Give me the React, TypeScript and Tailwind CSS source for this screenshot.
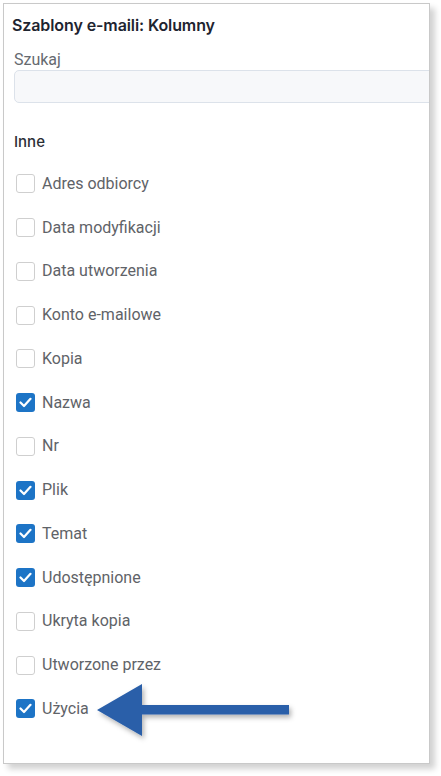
import React from "react";

const items: [string, boolean][] = [
  ["Adres odbiorcy", false],
  ["Data modyfikacji", false],
  ["Data utworzenia", false],
  ["Konto e-mailowe", false],
  ["Kopia", false],
  ["Nazwa", true],
  ["Nr", false],
  ["Plik", true],
  ["Temat", true],
  ["Udostępnione", true],
  ["Ukryta kopia", false],
  ["Utworzone przez", false],
  ["Użycia", true],
];

function Box({ checked }: { checked: boolean }) {
  if (checked) {
    return (
      <div className="w-[19px] h-[19px] rounded-[3px] bg-[#1d74c6] flex items-center justify-center shrink-0">
        <svg width="13" height="11" viewBox="0 0 13 11">
          <path d="M1.5 5.5 L5 9 L11.5 1.8" fill="none" stroke="white" strokeWidth="2.2" strokeLinecap="round" strokeLinejoin="round" />
        </svg>
      </div>
    );
  }
  return <div className="w-[19px] h-[19px] rounded-[3px] border border-[#cfcfcf] bg-white shrink-0" />;
}

export default function App() {
  return (
    <div className="w-[441px] h-[776px] bg-white pt-[3px] pl-[3px] relative" style={{ fontFamily: "Roboto, 'Liberation Sans', sans-serif" }}>
      <div className="w-[427px] h-[761px] border border-[#c9c9c9] bg-white overflow-hidden shadow-[5px_5px_6px_rgba(0,0,0,0.18)]">
        <div className="pl-[8px] pt-[10px]">
          <div className="text-[16px] font-semibold text-[#1e2430] leading-[22px] tracking-[-0.1px]" style={{ fontFamily: "Inter, Roboto, sans-serif" }}>
            Szablony e-maili: Kolumny
          </div>
          <div className="mt-[15px] pl-[2px] text-[16px] text-[#666a70] leading-[18px]">Szukaj</div>
          <div className="mt-[1px] ml-[2px] w-[440px] h-[33px] rounded-l-[5px] border border-[#dce2ea] bg-[#f7f8fa]" />
          <div className="mt-[29px] pl-[2px] text-[15px] font-medium text-[#2b2f36] leading-[20px]" style={{ fontFamily: "Inter, Roboto, sans-serif" }}>Inne</div>
          <div className="mt-[10px] pl-[4px] flex flex-col">
            {items.map(([label, checked]) => (
              <div key={label} className="h-[43.75px] flex items-center gap-[7px]">
                <Box checked={checked} />
                <span className="text-[16px] text-[#5f6368] leading-[20px]">{label}</span>
              </div>
            ))}
          </div>
        </div>
      </div>
      <svg className="absolute left-0 top-0 pointer-events-none" width="441" height="776" viewBox="0 0 441 776">
        <defs>
          <filter id="sh" x="-20%" y="-50%" width="140%" height="200%">
            <feDropShadow dx="2" dy="3" stdDeviation="2.5" floodColor="#000" floodOpacity="0.3" />
          </filter>
        </defs>
        <path d="M97 710 L142 684 L142 705 L289 705 L289 714.5 L142 714.5 L142 736 Z" fill="#2a5fa9" filter="url(#sh)" />
      </svg>
    </div>
  );
}
